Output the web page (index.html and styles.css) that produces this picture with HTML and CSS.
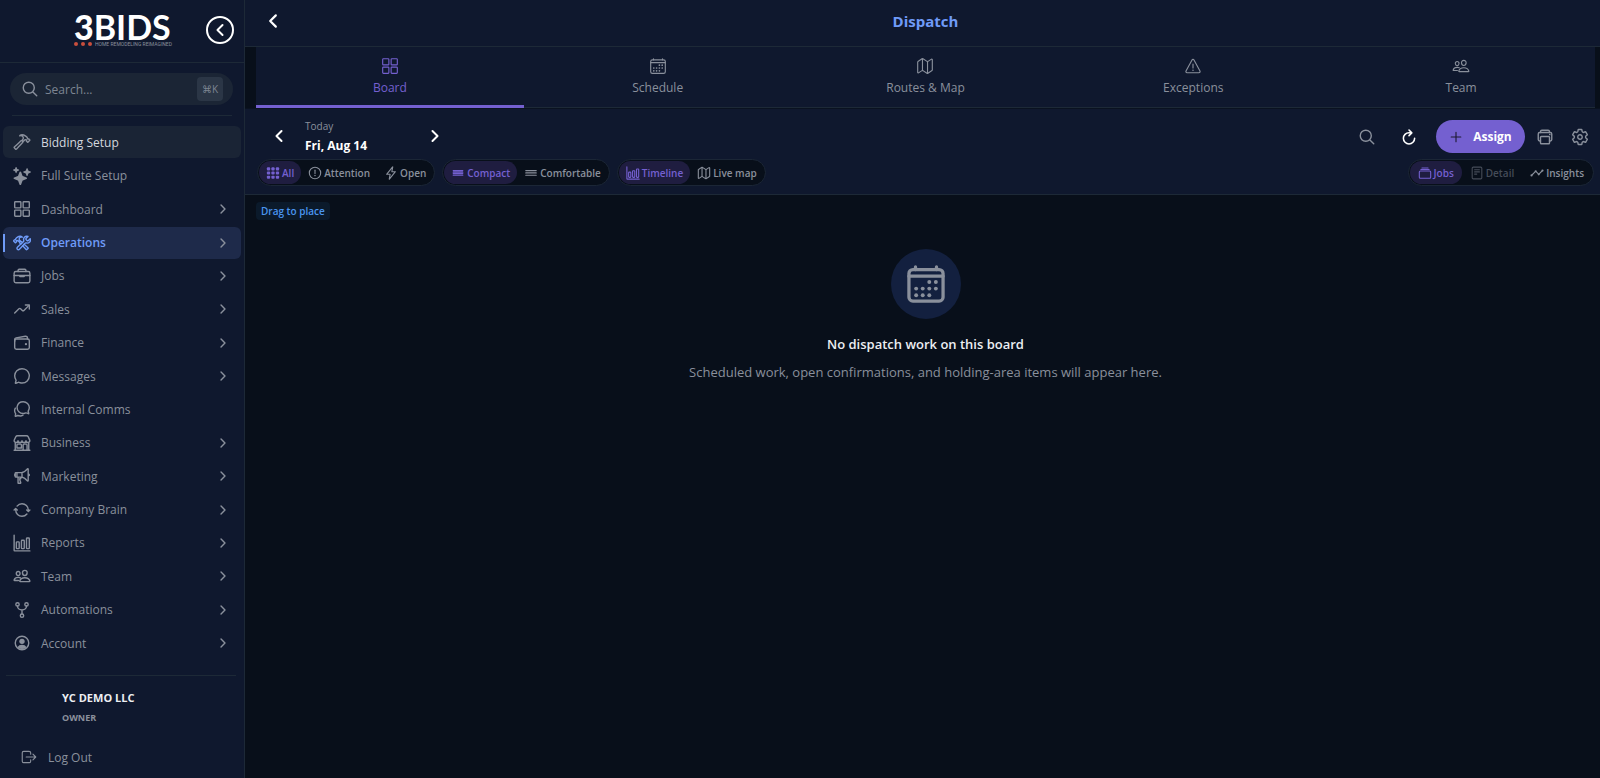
FILE: index.html
```html
<!DOCTYPE html>
<html lang="en">

<head>
    <meta charset="UTF-8">
    <meta name="viewport" content="width=device-width, initial-scale=1.0">
    <title>Dispatch</title>
    <link rel="stylesheet" href="styles.css">
</head>

<body>
    <!-- icon sprite -->
    <svg class="sprite" aria-hidden="true">
        <symbol id="i-grid" viewBox="0 0 512 512"><rect x="48" y="48" width="176" height="176" rx="20"/><rect x="288" y="48" width="176" height="176" rx="20"/><rect x="48" y="288" width="176" height="176" rx="20"/><rect x="288" y="288" width="176" height="176" rx="20"/></symbol>
        <symbol id="i-search" viewBox="0 0 512 512"><path d="M221.09 64a157.09 157.09 0 10157.09 157.09A157.1 157.1 0 00221.09 64zM338.29 338.29L448 448"/></symbol>
        <symbol id="i-hammer" viewBox="0 0 512 512"><path d="M277.42 247a24.68 24.68 0 00-4.08-5.47L255 223.44a21.63 21.63 0 00-6.56-4.57 20.93 20.93 0 00-23.28 4.27c-6.36 6.26-18 17.68-39 38.43C146 301.3 71.43 367.89 37.71 396.29a16 16 0 00-1.09 23.54l39 39.43a16.13 16.13 0 0023.67-.89c29.24-34.37 96.3-109 136-148.23 20.41-20.06 31.29-30.65 37.78-36.83a21.65 21.65 0 004.35-26.31z"/><path d="M478.43 201l-34.31-34a5.44 5.44 0 00-4-1.59 5.59 5.59 0 00-4 1.59h0a11.41 11.41 0 01-9.55 3.27c-4.48-.49-9.25-1.88-12.33-4.86-7-6.86 1.09-20.36-5.07-29a242.88 242.88 0 00-23.08-26.72c-7.06-7-34.81-33.47-81.55-52.53a123.79 123.79 0 00-47-9.24c-26.35 0-46.61 11.76-54 18.51-5.88 5.32-12 13.77-12 13.77a91.29 91.29 0 0110.81-3.2 79.53 79.53 0 0123.28-1.49C241.19 76.8 259.94 84.1 270 92c16.21 13 23.18 30.39 24.27 52.83.8 16.69-15.23 37.76-30.44 54.94a7.85 7.85 0 00.4 10.83l21.24 21.23a8 8 0 0011.14.1c13.93-13.51 31.09-28.47 40.82-34.46s17.58-7.68 21.35-8.09a35.71 35.71 0 0121.3 4.62 13.65 13.65 0 013.08 2.38c6.46 6.56 6.07 17.28-.5 23.74l-2 1.89a5.5 5.5 0 000 7.84l34.31 34a5.5 5.5 0 004 1.58 5.65 5.65 0 004-1.58L478.43 209a5.82 5.82 0 000-8z"/></symbol>
        <symbol id="i-sparkles" viewBox="0 0 512 512"><path class="solid" d="M208 512a24.84 24.84 0 01-23.34-16l-39.84-103.6a16.06 16.06 0 00-9.19-9.19L32 343.34a25 25 0 010-46.68l103.6-39.84a16.06 16.06 0 009.19-9.19L184.66 144a25 25 0 0146.68 0l39.84 103.6a16.06 16.06 0 009.19 9.19l103 39.63a25.49 25.49 0 0116.63 24.1 24.82 24.82 0 01-16 22.82l-103.6 39.84a16.06 16.06 0 00-9.19 9.19L231.34 496A24.84 24.84 0 01208 512zM88 176a14.67 14.67 0 01-13.69-9.4l-16.86-43.84a7.28 7.28 0 00-4.21-4.21L9.4 101.69a14.67 14.67 0 010-27.38l43.84-16.86a7.31 7.31 0 004.21-4.21L74.16 9.79A15 15 0 0186.23.11a14.67 14.67 0 0115.46 9.29l16.86 43.84a7.31 7.31 0 004.21 4.21l43.84 16.86a14.67 14.67 0 010 27.38l-43.84 16.86a7.28 7.28 0 00-4.21 4.21l-16.86 43.84A14.67 14.67 0 0188 176zM400 256a16 16 0 01-14.93-10.26l-22.84-59.37a8 8 0 00-4.6-4.6l-59.37-22.84a16 16 0 010-29.86l59.37-22.84a8 8 0 004.6-4.6l22.67-58.95a16.45 16.45 0 0113.17-10.57 16 16 0 0116.86 10.15l22.84 59.37a8 8 0 004.6 4.6l59.37 22.84a16 16 0 010 29.86l-59.37 22.84a8 8 0 00-4.6 4.6l-22.84 59.37A16 16 0 01400 256z"/></symbol>
        <symbol id="i-construct" viewBox="0 0 512 512"><path d="M436.67 184.11a27.17 27.17 0 01-38.3 0l-22.48-22.49a27.15 27.15 0 010-38.29l50.89-50.89a.85.85 0 00-.26-1.38C393.68 57.57 351.09 64.15 324.05 91c-25.88 25.69-27.35 64.27-17.87 98a27 27 0 01-7.67 27.14l-173 160.76a40.76 40.76 0 1057.57 57.54l162.15-173.3a27 27 0 0126.77-7.7c33.46 8.94 71.49 7.26 97.07-17.94 27.49-27.08 33.42-74.94 20.1-102.33a.85.85 0 00-1.36-.22z"/><path d="M224 284c-17.48-17-25.49-24.91-31-30.29a18.24 18.24 0 01-3.33-21.35 20.76 20.76 0 013.5-4.62l15.68-15.29a18.66 18.66 0 015.63-3.87 18.11 18.11 0 0120 3.62c5.45 5.29 15.43 15 33.41 32.52M317.07 291.3c40.95 38.1 90.62 83.27 110 99.41a13.46 13.46 0 01.94 19.92L394.63 444a14 14 0 01-20.29-.76c-16.53-19.18-61.09-67.11-99.27-107M17.34 193.5l29.41-28.74a4.71 4.71 0 013.41-1.35 4.85 4.85 0 013.41 1.35h0a9.86 9.86 0 008.19 2.77c3.83-.42 7.92-1.6 10.57-4.12 6-5.8-.94-17.23 4.34-24.54a207 207 0 0119.78-22.6c6-5.88 29.84-28.32 69.9-44.45A107.31 107.31 0 01206.67 64c22.59 0 40 10 46.26 15.67a89.54 89.54 0 0110.28 11.64 78.92 78.92 0 00-9.21-2.77 68.82 68.82 0 00-20-1.26c-13.33 1.09-29.41 7.26-38 14-13.9 11-19.87 25.72-20.81 44.71-.68 14.12 2.72 22.1 36.1 55.49a6.6 6.6 0 01-.34 9.16l-18.22 18a6.88 6.88 0 01-9.54.09c-21.94-21.94-36.65-33.09-45-38.16s-15.07-6.5-18.3-6.85a30.85 30.85 0 00-18.27 3.87 11.39 11.39 0 00-2.64 2 14.14 14.14 0 00.42 20.08l1.71 1.6a4.63 4.63 0 010 6.64L71.73 246.6a4.71 4.71 0 01-3.41 1.4 4.86 4.86 0 01-3.41-1.35l-47.57-46.43a4.88 4.88 0 010-6.72z"/></symbol>
        <symbol id="i-briefcase" viewBox="0 0 512 512"><rect x="32" y="128" width="448" height="320" rx="48"/><path d="M144 128V96a32 32 0 0132-32h160a32 32 0 0132 32v32M480 240H32M320 240v24a8 8 0 01-8 8H200a8 8 0 01-8-8v-24"/></symbol>
        <symbol id="i-trending" viewBox="0 0 512 512"><path d="M352 144h112v112"/><path d="M48 368l121.37-121.37a32 32 0 0145.26 0l50.74 50.74a32 32 0 0045.26 0L448 160"/></symbol>
        <symbol id="i-wallet" viewBox="0 0 512 512"><rect x="48" y="144" width="416" height="288" rx="48"/><path d="M411.36 144v-30A50 50 0 00352 64.9L88.64 109.85A50 50 0 0048 159v49"/><circle class="solid" cx="368" cy="288" r="32"/></symbol>
        <symbol id="i-chat" viewBox="0 0 512 512"><path d="M87.49 380c1.19-4.38-1.44-10.47-3.95-14.86a44.86 44.86 0 00-2.54-3.8 199.81 199.81 0 01-33-110C47.65 139.09 140.73 48 255.83 48 356.21 48 440 117.54 459.58 209.85a199 199 0 014.42 41.64c0 112.41-89.49 204.93-204.59 204.93-18.3 0-43-4.6-56.47-8.37s-26.92-8.77-30.39-10.11a31.09 31.09 0 00-11.12-2.07 30.71 30.71 0 00-12.09 2.43l-67.83 24.48a16 16 0 01-4.67 1.22 9.6 9.6 0 01-9.57-9.74 15.85 15.85 0 01.6-3.29z"/></symbol>
        <symbol id="i-chats" viewBox="0 0 512 512"><path d="M431 320.6c-1-3.6 1.2-8.6 3.3-12.2a33.68 33.68 0 012.1-3.1A162 162 0 00464 215c.3-92.2-77.5-167-173.7-167-83.9 0-153.9 57.1-170.3 132.9a160.7 160.7 0 00-3.7 34.2c0 92.3 74.8 169.1 171 169.1 15.3 0 35.9-4.6 47.2-7.7s22.5-7.2 25.4-8.3a26.44 26.44 0 019.3-1.7 26 26 0 0110.1 2l56.7 20.1a13.52 13.52 0 003.9 1 8 8 0 008-8 12.85 12.85 0 00-.5-2.7z"/><path d="M66.46 232a146.23 146.23 0 006.39 152.67c2.31 3.49 3.61 6.19 3.21 8s-11.93 61.87-11.93 61.87a8 8 0 002.71 7.68A8.17 8.17 0 0072 464a7.26 7.26 0 002.91-.6l56.21-22a15.7 15.7 0 0112 .2c18.94 7.38 39.88 12 60.83 12A159.21 159.21 0 00284 432.11"/></symbol>
        <symbol id="i-store" viewBox="0 0 512 512"><path d="M448 448V240M64 240v208M382.47 48H129.53c-21.79 0-41.47 12-49.93 30.46L36.3 173c-14.58 31.81 9.63 67.85 47.19 69h2c31.4 0 56.85-25.18 56.85-52.23 0 27 25.46 52.23 56.86 52.23s56.8-23.38 56.8-52.23c0 27 25.45 52.23 56.85 52.23s56.86-23.38 56.86-52.23c0 28.85 25.45 52.23 56.85 52.23h1.95c37.56-1.17 61.77-37.21 47.19-69l-43.3-94.54C423.94 60 404.26 48 382.47 48zM32 464h448M136 288h80a24 24 0 0124 24v88H112v-88a24 24 0 0124-24zM288 464V312a24 24 0 0124-24h64a24 24 0 0124 24v152"/></symbol>
        <symbol id="i-megaphone" viewBox="0 0 512 512"><path d="M407.94 52.22S321.3 160 240 160H80a16 16 0 00-16 16v96a16 16 0 0016 16h160c81.3 0 167.94 108.23 167.94 108.23 6.06 8 24.06 2.52 24.06-9.83V62c0-12.31-17-18.82-24.06-9.78zM64 256s-16-6-16-32 16-32 16-32M448 246s16-4.33 16-22-16-22-16-22M256 160v128M112 160v128M144 288v168a8 8 0 008 8h53a16 16 0 0015.29-20.73C211.91 416.39 192 386.08 192 336h16a16 16 0 0016-16v-16a16 16 0 00-16-16h-16"/></symbol>
        <symbol id="i-sync" viewBox="0 0 512 512"><path d="M434.67 285.59v-29.8c0-98.73-80.24-178.79-179.2-178.79a179 179 0 00-140.14 67.36m-38.53 82v29.8C76.8 355 157 435 256 435a180.45 180.45 0 00140-66.92M32 256l44-44 46 44M480 256l-44 44-46-44"/></symbol>
        <symbol id="i-chart" viewBox="0 0 512 512"><path d="M32 32v432a16 16 0 0016 16h432"/><rect x="96" y="224" width="80" height="192" rx="20"/><rect x="240" y="176" width="80" height="240" rx="20"/><rect x="384" y="112" width="80" height="304" rx="20"/></symbol>
        <symbol id="i-people" viewBox="0 0 512 512"><path d="M402 168c-2.93 40.67-33.1 72-66 72s-63.12-31.32-66-72c-3-42.31 26.37-72 66-72s69 30.46 66 72zM336 304c-65.17 0-127.84 32.37-143.54 95.41-2.08 8.34 3.15 16.59 11.72 16.59h263.65c8.57 0 13.77-8.25 11.72-16.59C463.85 335.36 401.18 304 336 304zM200 185.94c-2.34 32.48-26.72 58.06-53 58.06s-50.7-25.57-53-58.06C91.61 152.15 115.34 128 147 128s55.39 24.77 53 57.94zM206 306c-18.05-8.27-37.93-11.45-59-11.45-52 0-102.1 25.85-114.65 76.2-1.65 6.66 2.53 13.25 9.37 13.25H154"/></symbol>
        <symbol id="i-network" viewBox="0 0 512 512"><circle cx="128" cy="96" r="48"/><circle cx="256" cy="416" r="48"/><circle cx="384" cy="96" r="48"/><path d="M256 256v112M128 144c0 74.67 68.92 112 128 112M384 144c0 74.67-68.92 112-128 112"/></symbol>
        <symbol id="i-person" viewBox="0 0 512 512"><circle cx="256" cy="256" r="192"/><circle class="solid" cx="256" cy="208" r="76"/><path class="solid" d="M256 304c-56 0-104 24-128 70a176 176 0 00256 0c-24-46-72-70-128-70z"/></symbol>
        <symbol id="i-logout" viewBox="0 0 512 512"><path d="M304 336v40a40 40 0 01-40 40H104a40 40 0 01-40-40V136a40 40 0 0140-40h152c22.09 0 48 17.91 48 40v40M368 336l80-80-80-80M176 256h256"/></symbol>
        <symbol id="i-calendar" viewBox="0 0 512 512"><rect x="48" y="80" width="416" height="384" rx="48"/><path d="M128 48v32M384 48v32M464 160H48"/><g class="solid"><circle cx="296" cy="232" r="24"/><circle cx="376" cy="232" r="24"/><circle cx="136" cy="312" r="24"/><circle cx="216" cy="312" r="24"/><circle cx="296" cy="312" r="24"/><circle cx="376" cy="312" r="24"/><circle cx="136" cy="392" r="24"/><circle cx="216" cy="392" r="24"/><circle cx="296" cy="392" r="24"/></g></symbol>
        <symbol id="i-map" viewBox="0 0 512 512"><path d="M313.27 124.64L198.73 51.36a32 32 0 00-29.28.35L56.51 127.49A16 16 0 0048 141.63v295.8a16 16 0 0023.49 14.14l97.82-63.79a32 32 0 0129.5-.24l111.86 73a32 32 0 0029.27-.11l115.43-75.94a16 16 0 008.63-14.2V74.57a16 16 0 00-23.49-14.14l-98 63.86a32 32 0 01-29.24.35zM328 128v336M184 48v336"/></symbol>
        <symbol id="i-warning" viewBox="0 0 512 512"><path d="M85.57 446.25h340.86a32 32 0 0028.17-47.17L284.18 82.58c-12.09-22.44-44.27-22.44-56.36 0L57.4 399.08a32 32 0 0028.17 47.17zM256 200v112"/><circle class="solid" cx="256" cy="378" r="22"/></symbol>
        <symbol id="i-alert" viewBox="0 0 512 512"><circle cx="256" cy="256" r="208"/><path d="M256 152v120"/><circle class="solid" cx="256" cy="350" r="26"/></symbol>
        <symbol id="i-flash" viewBox="0 0 512 512"><path d="M315.27 33L96 304h128l-31.51 173.23a2.36 2.36 0 002.33 2.77h0a2.36 2.36 0 001.89-.95L416 208H288l31.66-173.25a2.45 2.45 0 00-2.44-2.75h0a2.42 2.42 0 00-1.95 1z"/></symbol>
        <symbol id="i-apps" viewBox="0 0 512 512"><g class="solid"><rect x="32" y="48" width="120" height="112" rx="36"/><rect x="196" y="48" width="120" height="112" rx="36"/><rect x="360" y="48" width="120" height="112" rx="36"/><rect x="32" y="200" width="120" height="112" rx="36"/><rect x="196" y="200" width="120" height="112" rx="36"/><rect x="360" y="200" width="120" height="112" rx="36"/><rect x="32" y="352" width="120" height="112" rx="36"/><rect x="196" y="352" width="120" height="112" rx="36"/><rect x="360" y="352" width="120" height="112" rx="36"/></g></symbol>
        <symbol id="i-rows4" viewBox="0 0 512 512"><path d="M80 168h352M80 224h352M80 280h352M80 336h352"/></symbol>
        <symbol id="i-rows3" viewBox="0 0 512 512"><path d="M64 168h384M64 252h384M64 336h384"/></symbol>
        <symbol id="i-albums" viewBox="0 0 512 512"><rect x="48" y="184" width="416" height="264" rx="36"/><path d="M144 72h224M104 128h304"/></symbol>
        <symbol id="i-reader" viewBox="0 0 512 512"><rect x="80" y="40" width="352" height="432" rx="40"/><path d="M168 136h176M168 216h176M168 296h80"/></symbol>
        <symbol id="i-analytics" viewBox="0 0 512 512"><path d="M344 280l88-88M232 216l64 64M80 320l104-104"/><g class="solid"><circle cx="456" cy="168" r="40"/><circle cx="320" cy="304" r="40"/><circle cx="208" cy="192" r="40"/><circle cx="56" cy="344" r="40"/></g></symbol>
        <symbol id="i-back" viewBox="0 0 512 512"><path d="M328 112L184 256l144 144"/></symbol>
        <symbol id="i-forward" viewBox="0 0 512 512"><path d="M184 112l144 144-144 144"/></symbol>
        <symbol id="i-refresh" viewBox="0 0 512 512"><path d="M320 146s24.36-12-64-12a160 160 0 10160 160M256 58l80 80-80 80"/></symbol>
        <symbol id="i-print" viewBox="0 0 512 512"><path d="M384 368h24a40.12 40.12 0 0040-40V168a40.12 40.12 0 00-40-40H104a40.12 40.12 0 00-40 40v160a40.12 40.12 0 0040 40h24"/><rect x="128" y="240" width="256" height="208" rx="24"/><path d="M384 128v-24a40.12 40.12 0 00-40-40H168a40.12 40.12 0 00-40 40v24"/><circle class="solid" cx="392" cy="184" r="24"/></symbol>
        <symbol id="i-settings" viewBox="0 0 512 512"><path d="M262.29 192.31a64 64 0 1057.4 57.4 64.13 64.13 0 00-57.4-57.4zM416.39 256a154.34 154.34 0 01-1.53 20.79l45.21 35.46a10.81 10.81 0 012.45 13.75l-42.77 74a10.81 10.81 0 01-13.14 4.59l-44.9-18.08a16.11 16.11 0 00-15.17 1.75A164.48 164.48 0 01325 400.8a15.94 15.94 0 00-8.82 12.14l-6.73 47.89a11.08 11.08 0 01-10.68 9.17h-85.54a11.11 11.11 0 01-10.69-8.87l-6.72-47.82a16.07 16.07 0 00-9-12.22 155.3 155.3 0 01-21.46-12.57 16 16 0 00-15.11-1.71l-44.89 18.07a10.81 10.81 0 01-13.14-4.58l-42.77-74a10.8 10.8 0 012.45-13.75l38.21-30a16.05 16.05 0 006-14.08c-.36-4.17-.58-8.33-.58-12.5s.21-8.27.58-12.35a16 16 0 00-6.07-13.94l-38.19-30A10.81 10.81 0 0149.48 186l42.77-74a10.81 10.81 0 0113.14-4.59l44.9 18.08a16.11 16.11 0 0015.17-1.75A164.48 164.48 0 01187 111.2a15.94 15.94 0 008.82-12.14l6.73-47.89A11.08 11.08 0 01213.23 42h85.54a11.11 11.11 0 0110.69 8.87l6.72 47.82a16.07 16.07 0 009 12.22 155.3 155.3 0 0121.46 12.57 16 16 0 0015.11 1.71l44.89-18.07a10.81 10.81 0 0113.14 4.58l42.77 74a10.8 10.8 0 01-2.45 13.75l-38.21 30a16.05 16.05 0 00-6.05 14.08c.33 4.14.55 8.3.55 12.47z"/></symbol>
        <symbol id="i-add" viewBox="0 0 512 512"><path d="M256 80v352M432 256H80"/></symbol>
    </svg>

    <div class="app">
        <aside class="sidebar">
            <div class="side-head">
                <a class="logo" href="#">
                    <span class="logo-name"><b>3</b>BIDS</span>
                    <span class="logo-sub"><i></i><i></i><i></i><small>HOME REMODELING REIMAGINED</small></span>
                </a>
                <button class="collapse" aria-label="Collapse sidebar"><svg class="icon bold"><use href="#i-back"/></svg></button>
            </div>

            <label class="search">
                <svg class="icon"><use href="#i-search"/></svg>
                <input type="text" placeholder="Search..." aria-label="Search">
                <kbd>⌘K</kbd>
            </label>

            <nav class="menu">
                <a class="lit" href="#"><svg class="icon"><use href="#i-hammer"/></svg><span>Bidding Setup</span></a>
                <a href="#"><svg class="icon"><use href="#i-sparkles"/></svg><span>Full Suite Setup</span></a>
                <a href="#"><svg class="icon"><use href="#i-grid"/></svg><span>Dashboard</span><svg class="icon arrow"><use href="#i-forward"/></svg></a>
                <a class="active" href="#"><svg class="icon"><use href="#i-construct"/></svg><span>Operations</span><svg class="icon arrow"><use href="#i-forward"/></svg></a>
                <a href="#"><svg class="icon"><use href="#i-briefcase"/></svg><span>Jobs</span><svg class="icon arrow"><use href="#i-forward"/></svg></a>
                <a href="#"><svg class="icon"><use href="#i-trending"/></svg><span>Sales</span><svg class="icon arrow"><use href="#i-forward"/></svg></a>
                <a href="#"><svg class="icon"><use href="#i-wallet"/></svg><span>Finance</span><svg class="icon arrow"><use href="#i-forward"/></svg></a>
                <a href="#"><svg class="icon"><use href="#i-chat"/></svg><span>Messages</span><svg class="icon arrow"><use href="#i-forward"/></svg></a>
                <a href="#"><svg class="icon"><use href="#i-chats"/></svg><span>Internal Comms</span></a>
                <a href="#"><svg class="icon"><use href="#i-store"/></svg><span>Business</span><svg class="icon arrow"><use href="#i-forward"/></svg></a>
                <a href="#"><svg class="icon"><use href="#i-megaphone"/></svg><span>Marketing</span><svg class="icon arrow"><use href="#i-forward"/></svg></a>
                <a href="#"><svg class="icon"><use href="#i-sync"/></svg><span>Company Brain</span><svg class="icon arrow"><use href="#i-forward"/></svg></a>
                <a href="#"><svg class="icon"><use href="#i-chart"/></svg><span>Reports</span><svg class="icon arrow"><use href="#i-forward"/></svg></a>
                <a href="#"><svg class="icon"><use href="#i-people"/></svg><span>Team</span><svg class="icon arrow"><use href="#i-forward"/></svg></a>
                <a href="#"><svg class="icon"><use href="#i-network"/></svg><span>Automations</span><svg class="icon arrow"><use href="#i-forward"/></svg></a>
                <a href="#"><svg class="icon"><use href="#i-person"/></svg><span>Account</span><svg class="icon arrow"><use href="#i-forward"/></svg></a>
            </nav>

            <div class="side-foot">
                <p class="company">YC DEMO LLC</p>
                <p class="role">OWNER</p>
                <button class="logout"><svg class="icon"><use href="#i-logout"/></svg>Log Out</button>
            </div>
        </aside>

        <main class="main">
            <header class="topbar">
                <button class="back" aria-label="Back"><svg class="icon bold"><use href="#i-back"/></svg></button>
                <h1>Dispatch</h1>
            </header>

            <nav class="tabs">
                <a class="active" href="#"><svg class="icon"><use href="#i-grid"/></svg>Board</a>
                <a href="#"><svg class="icon"><use href="#i-calendar"/></svg>Schedule</a>
                <a href="#"><svg class="icon"><use href="#i-map"/></svg>Routes &amp; Map</a>
                <a href="#"><svg class="icon"><use href="#i-warning"/></svg>Exceptions</a>
                <a href="#"><svg class="icon"><use href="#i-people"/></svg>Team</a>
            </nav>

            <section class="toolbar">
                <div class="row">
                    <div class="date">
                        <button aria-label="Previous day"><svg class="icon bold"><use href="#i-back"/></svg></button>
                        <div class="day">
                            <span>Today</span>
                            <strong>Fri, Aug 14</strong>
                        </div>
                        <button aria-label="Next day"><svg class="icon bold"><use href="#i-forward"/></svg></button>
                    </div>
                    <div class="actions">
                        <button aria-label="Search"><svg class="icon"><use href="#i-search"/></svg></button>
                        <button class="white" aria-label="Refresh"><svg class="icon bold"><use href="#i-refresh"/></svg></button>
                        <button class="assign"><svg class="icon"><use href="#i-add"/></svg>Assign</button>
                        <button class="small" aria-label="Print"><svg class="icon"><use href="#i-print"/></svg></button>
                        <button class="small" aria-label="Settings"><svg class="icon"><use href="#i-settings"/></svg></button>
                    </div>
                </div>
                <div class="row filters">
                    <div class="group">
                        <button class="on"><svg class="icon"><use href="#i-apps"/></svg>All</button>
                        <button><svg class="icon"><use href="#i-alert"/></svg>Attention</button>
                        <button><svg class="icon"><use href="#i-flash"/></svg>Open</button>
                    </div>
                    <div class="group">
                        <button class="on"><svg class="icon"><use href="#i-rows4"/></svg>Compact</button>
                        <button><svg class="icon"><use href="#i-rows3"/></svg>Comfortable</button>
                    </div>
                    <div class="group">
                        <button class="on"><svg class="icon"><use href="#i-chart"/></svg>Timeline</button>
                        <button><svg class="icon"><use href="#i-map"/></svg>Live map</button>
                    </div>
                    <div class="group last">
                        <button class="on"><svg class="icon"><use href="#i-albums"/></svg>Jobs</button>
                        <button disabled><svg class="icon"><use href="#i-reader"/></svg>Detail</button>
                        <button><svg class="icon"><use href="#i-analytics"/></svg>Insights</button>
                    </div>
                </div>
            </section>

            <section class="board">
                <span class="hint">Drag to place</span>
                <div class="empty">
                    <div class="empty-icon"><svg class="icon"><use href="#i-calendar"/></svg></div>
                    <h2>No dispatch work on this board</h2>
                    <p>Scheduled work, open confirmations, and holding-area items will appear here.</p>
                </div>
            </section>
        </main>
    </div>
</body>

</html>
```
FILE: styles.css
```css
* {
    margin: 0;
    padding: 0;
    box-sizing: border-box;
}

body {
    background-color: #080f1a;
    color: #8a909c;
    font-family: "Segoe UI", "Open Sans", "Noto Sans", sans-serif;
    font-size: 12px;
}

a {
    color: inherit;
    text-decoration: none;
}

button {
    display: flex;
    align-items: center;
    justify-content: center;
    border: none;
    background: none;
    color: inherit;
    font: inherit;
    cursor: pointer;
}

.sprite {
    display: none;
}

.icon {
    flex: none;
    width: 18px;
    height: 18px;
    fill: none;
    stroke: currentColor;
    stroke-width: 40;
    stroke-linecap: round;
    stroke-linejoin: round;
}

.icon.bold {
    stroke-width: 56;
}

.solid {
    fill: currentColor;
    stroke: none;
}

.app {
    display: flex;
    min-height: 100vh;
}

/* sidebar */
.sidebar {
    display: flex;
    flex-direction: column;
    flex: none;
    width: 245px;
    background-color: #0f182e;
    border-right: 1px solid #1d2937;
}

.side-head {
    display: flex;
    align-items: center;
    justify-content: flex-end;
    gap: 36px;
    height: 63px;
    padding: 0 10px 3px 0;
    border-bottom: 1px solid #1d2937;
}

.logo {
    display: flex;
    flex-direction: column;
    width: 96px;
}

.logo-name {
    color: #fff;
    font-family: Lato, sans-serif;
    font-size: 34px;
    font-weight: 700;
    line-height: 28px;
}

.logo-name b {
    font-weight: 900;
}

.logo-sub {
    display: flex;
    align-items: center;
    gap: 3px;
    height: 6px;
    white-space: nowrap;
}

.logo-sub i {
    flex: none;
    width: 4px;
    height: 4px;
    border-radius: 50%;
    background-color: #c94f3d;
}

.logo-sub small {
    font-family: Roboto, sans-serif;
    font-size: 5px;
    line-height: 6px;
}

.collapse {
    width: 28px;
    height: 28px;
    border: 2px solid #fff;
    border-radius: 50%;
    color: #fff;
}

.search {
    display: flex;
    align-items: center;
    gap: 6px;
    height: 32px;
    margin: 10px 11px 0 10px;
    padding: 0 10px 0 11px;
    border-radius: 16px;
    background-color: #1b2535;
}

.search input {
    flex: 1;
    min-width: 0;
    border: none;
    outline: none;
    background: none;
    color: inherit;
    font: inherit;
}

.search input::placeholder {
    color: #7d8592;
}

.search kbd {
    padding: 0 5px;
    border-radius: 4px;
    background-color: #2b3646;
    color: #7d8592;
    font-family: "Open Sans", "DejaVu Sans", sans-serif;
    font-size: 10px;
    line-height: 24px;
}

.menu {
    display: flex;
    flex-direction: column;
    flex: 1;
    justify-content: space-between;
    margin: 10px 3px 16px;
}

.menu::before {
    content: "";
    height: 1px;
    margin: 0 9px 9px;
    background-color: #1d2937;
}

.menu a {
    display: flex;
    align-items: center;
    gap: 10px;
    height: 32px;
    padding: 0 11px 0 10px;
    border-radius: 6px;
}

.menu .icon.arrow {
    width: 14px;
    height: 14px;
    margin-left: auto;
    stroke-width: 52;
}

.menu a.lit {
    background-color: #1a2435;
    color: #d3d7de;
}

.menu a.lit .icon {
    color: #8a909c;
}

.menu a.active {
    position: relative;
    background-color: #1e2a4a;
    color: #6f9bf8;
    font-weight: 600;
}

.menu a.active::before {
    content: "";
    position: absolute;
    left: 0;
    top: 7px;
    width: 2px;
    height: 18px;
    background-color: #6f9bf8;
}

.menu a.active .arrow {
    color: #8a909c;
}

.side-foot {
    margin: 0 8px 0 6px;
    padding: 12px 0 10px;
    border-top: 1px solid #1d2937;
}

.side-foot p {
    padding-left: 56px;
    font-weight: 700;
    line-height: 20px;
}

.side-foot .company {
    color: #eceef2;
    font-size: 11px;
}

.side-foot .role {
    font-size: 9px;
}

.logout {
    gap: 10px;
    height: 22px;
    margin-top: 18px;
    padding-left: 14px;
}

.logout .icon {
    stroke-width: 32;
}

/* main */
.main {
    display: flex;
    flex-direction: column;
    flex: 1;
    min-width: 0;
}

.topbar {
    display: grid;
    grid-template-columns: 56px 1fr 50px;
    align-items: center;
    height: 47px;
    padding-bottom: 4px;
    background-color: #0f182e;
    border-bottom: 1px solid #1d2937;
}

.topbar h1 {
    color: #6f9bf8;
    font-size: 15px;
    font-weight: 700;
    text-align: center;
}

.back .icon {
    width: 20px;
    height: 20px;
    color: #fff;
}

.tabs {
    display: flex;
    padding: 0 5px 0 11px;
    border-bottom: 1px solid #0a1220;
}

.tabs a {
    display: flex;
    flex: 1;
    flex-direction: column;
    align-items: center;
    gap: 3px;
    height: 61px;
    padding-top: 10px;
    background-color: #0f182e;
    border-bottom: 1px solid #1d2937;
    line-height: 20px;
}

.tabs .icon {
    stroke-width: 32;
}

.tabs a.active {
    border-bottom: 3px solid #7460d0;
    color: #7460d0;
}

.toolbar {
    padding: 5px 3px 8px 12px;
    background-color: #0f182e;
    border-bottom: 1px solid #1d2937;
}

.row {
    display: flex;
    align-items: center;
    height: 45px;
}

.date {
    display: flex;
    align-items: center;
    align-self: flex-start;
    height: 43px;
    color: #fff;
}

.date button {
    width: 44px;
    height: 40px;
}

.day {
    display: flex;
    flex-direction: column;
    width: 112px;
    padding-left: 4px;
    line-height: 19px;
}

.day span {
    color: #8a909c;
    font-size: 10px;
}

.actions {
    display: flex;
    align-items: center;
    margin-left: auto;
}

.actions button {
    width: 42px;
    height: 33px;
}

.actions button.small {
    width: 35px;
}

.actions button.white {
    color: #fff;
}

.actions button.white .icon {
    stroke-width: 44;
}

.actions button.assign {
    gap: 10px;
    width: 89px;
    margin: 0 2px 0 6px;
    border-radius: 17px;
    background-color: #7460d0;
    color: #fff;
    font-weight: 700;
}

.assign .icon {
    width: 14px;
    height: 14px;
    color: #1c1830;
}

.filters {
    gap: 7px;
    height: 27px;
    padding-right: 3px;
}

.group {
    display: flex;
    height: 27px;
    padding: 1px;
    border: 1px solid #1b2636;
    border-radius: 14px;
    background-color: #080f1a;
}

.group button {
    gap: 2px;
    padding: 0 7px;
    border-radius: 12px;
    font-size: 10px;
    font-weight: 600;
}

.group.last {
    margin-left: auto;
}

.group.last button {
    padding: 0 8px;
}

.group button.on {
    background-color: #1f1d40;
    color: #7460d0;
}

.group button:disabled {
    color: #454c58;
}

.group .icon {
    width: 14px;
    height: 14px;
}

.board {
    flex: 1;
    padding: 7px 5px 7px 11px;
}

.hint {
    display: inline-block;
    padding: 0 5px;
    border-radius: 4px;
    background-color: #0b1a2b;
    color: #4a95f0;
    font-size: 10px;
    font-weight: 600;
    line-height: 18px;
}

.empty {
    display: flex;
    flex-direction: column;
    align-items: center;
    margin-top: 29px;
}

.empty-icon {
    display: flex;
    align-items: center;
    justify-content: center;
    width: 70px;
    height: 70px;
    border-radius: 50%;
    background-color: #13203f;
}

.empty-icon .icon {
    width: 42px;
    height: 42px;
}

.empty h2 {
    margin-top: 13px;
    color: #eceef2;
    font-size: 13px;
    font-weight: 600;
    line-height: 24px;
}

.empty p {
    margin-top: 6px;
    font-size: 13px;
    line-height: 20px;
}
```
